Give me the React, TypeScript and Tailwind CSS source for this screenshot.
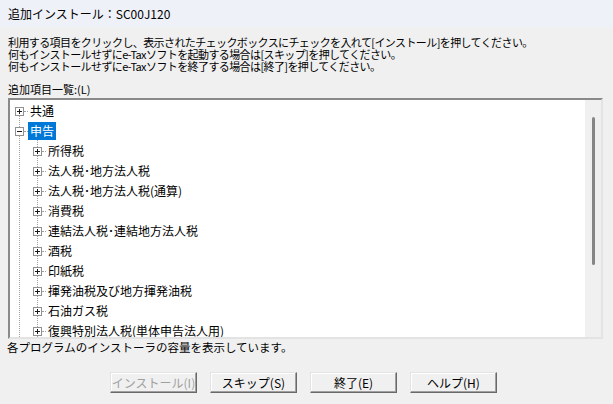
import React from "react";

const children = [
  "所得税",
  "法人税･地方法人税",
  "法人税･地方法人税(通算)",
  "消費税",
  "連結法人税･連結地方法人税",
  "酒税",
  "印紙税",
  "揮発油税及び地方揮発油税",
  "石油ガス税",
  "復興特別法人税(単体申告法人用)",
];

const ExpandBox = ({ open }: { open?: boolean }) => (
  <svg width="9" height="9" viewBox="0 0 9 9" className="shrink-0 bg-white">
    <rect x="0.5" y="0.5" width="8" height="8" fill="#fff" stroke="#919191" />
    <line x1="2" y1="4.5" x2="7" y2="4.5" stroke="#1a1a1a" />
    {!open && <line x1="4.5" y1="2" x2="4.5" y2="7" stroke="#1a1a1a" />}
  </svg>
);

const TreeRow = ({
  label,
  level,
  open,
  selected,
}: {
  label: string;
  level: number;
  open?: boolean;
  selected?: boolean;
}) => (
  <div
    className={`flex h-[20px] items-center ${level === 0 ? "pl-[5px]" : "pl-[23px]"}`}
  >
    <ExpandBox open={open} />
    <span className="w-[4px] shrink-0 border-t border-dotted border-[#a0a0a0]" />
    <span
      className={`whitespace-nowrap px-[2px] py-[1px] text-[12px] leading-[16px] ${
        selected ? "bg-[#0078d7] text-white" : "text-black"
      }`}
    >
      {label}
    </span>
  </div>
);

const Btn = ({ label, disabled }: { label: string; disabled?: boolean }) => (
  <button
    className={`h-[21px] w-[87px] border border-t-[#e3e3e3] border-l-[#e3e3e3] border-r-[#696969] border-b-[#696969] bg-[#f0f0f0] text-[12px] leading-none shadow-[inset_-1px_-1px_0_#a0a0a0,inset_1px_1px_0_#ffffff] ${
      disabled ? "text-[#a0a0a0]" : "text-black"
    }`}
  >
    {label}
  </button>
);

export default function App() {
  return (
    <div className="flex h-[404px] w-[613px] flex-col overflow-hidden bg-[#f0f0f0] font-['Noto_Sans_CJK_JP','Liberation_Sans',sans-serif] text-black">
      <div className="flex h-[27px] shrink-0 items-center bg-[#eff1f8] pl-[8px] text-[12px]">
        追加インストール：SC00J120
      </div>

      <div className="pl-[8px] pt-[9px] text-[11px] leading-[12px] tracking-[-0.6px]">
        <p>利用する項目をクリックし、表示されたチェックボックスにチェックを入れて[インストール]を押してください。</p>
        <p>何もインストールせずにe-Taxソフトを起動する場合は[スキップ]を押してください。</p>
        <p>何もインストールせずにe-Taxソフトを終了する場合は[終了]を押してください。</p>
      </div>

      <div className="pl-[8px] pt-[11px] text-[11px] leading-[12px]">追加項目一覧:(L)</div>

      <div className="ml-[8px] mt-[3px] flex h-[241px] w-[595px] shrink-0 border-2 border-t-[#8a8a8a] border-l-[#8a8a8a] border-r-[#e3e3e3] border-b-[#e3e3e3] bg-white">
        <div className="relative flex-1 overflow-hidden pt-[1px]">
          <span className="absolute left-[9px] top-[11px] bottom-0 border-l border-dotted border-[#a0a0a0]" />
          <span className="absolute left-[27px] top-[36px] bottom-0 border-l border-dotted border-[#a0a0a0]" />
          <div className="relative">
            <TreeRow label="共通" level={0} />
            <TreeRow label="申告" level={0} open selected />
            {children.map((c) => (
              <TreeRow key={c} label={c} level={1} />
            ))}
          </div>
        </div>
        <div className="w-[16px] shrink-0 bg-[#f0f0f0]">
          <div className="ml-[7px] mt-[17px] h-[148px] w-[3px] rounded-full bg-[#858585]" />
        </div>
      </div>

      <div className="pl-[7px] pt-[1px] text-[11.5px] leading-[14px]">
        各プログラムのインストーラの容量を表示しています。
      </div>

      <div className="flex gap-[13px] pl-[110px] pt-[18px]">
        <Btn label="インストール(I)" disabled />
        <Btn label="スキップ(S)" />
        <Btn label="終了(E)" />
        <Btn label="ヘルプ(H)" />
      </div>
    </div>
  );
}
